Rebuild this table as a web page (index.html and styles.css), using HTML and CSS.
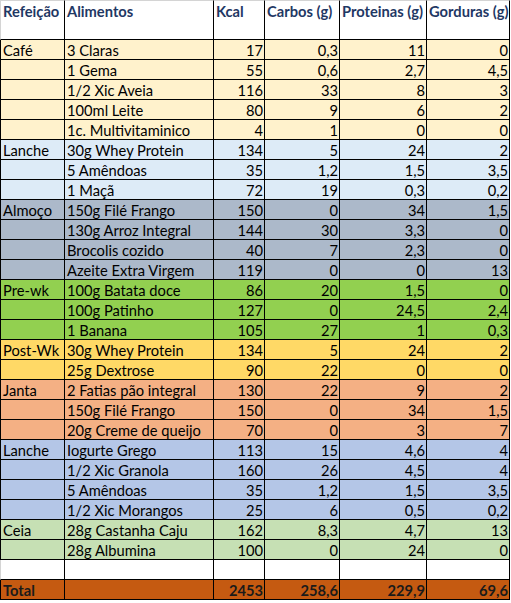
FILE: index.html
```html
<!DOCTYPE html>
<html lang="pt">
<head>
<meta charset="utf-8">
<title>Dieta</title>
<link rel="stylesheet" href="styles.css">
</head>
<body>
<div class="sheet">
  <div class="row head">
    <div class="c">Refeição</div><div class="c">Alimentos</div><div class="c">Kcal</div><div class="c">Carbos (g)</div><div class="c">Proteinas (g)</div><div class="c">Gorduras (g)</div>
  </div>
  <div class="row blank"><div class="c"></div><div class="c"></div><div class="c"></div><div class="c"></div><div class="c"></div><div class="c"></div></div>

  <div class="row cafe"><div class="c">Café</div><div class="c">3 Claras</div><div class="c n">17</div><div class="c n">0,3</div><div class="c n">11</div><div class="c n">0</div></div>
  <div class="row cafe"><div class="c"></div><div class="c">1 Gema</div><div class="c n">55</div><div class="c n">0,6</div><div class="c n">2,7</div><div class="c n">4,5</div></div>
  <div class="row cafe"><div class="c"></div><div class="c">1/2 Xic Aveia</div><div class="c n">116</div><div class="c n">33</div><div class="c n">8</div><div class="c n">3</div></div>
  <div class="row cafe"><div class="c"></div><div class="c">100ml Leite</div><div class="c n">80</div><div class="c n">9</div><div class="c n">6</div><div class="c n">2</div></div>
  <div class="row cafe"><div class="c"></div><div class="c">1c. Multivitaminico</div><div class="c n">4</div><div class="c n">1</div><div class="c n">0</div><div class="c n">0</div></div>

  <div class="row lanche"><div class="c">Lanche</div><div class="c">30g Whey Protein</div><div class="c n">134</div><div class="c n">5</div><div class="c n">24</div><div class="c n">2</div></div>
  <div class="row lanche"><div class="c"></div><div class="c">5 Amêndoas</div><div class="c n">35</div><div class="c n">1,2</div><div class="c n">1,5</div><div class="c n">3,5</div></div>
  <div class="row lanche"><div class="c"></div><div class="c">1 Maçã</div><div class="c n">72</div><div class="c n">19</div><div class="c n">0,3</div><div class="c n">0,2</div></div>

  <div class="row almoco"><div class="c">Almoço</div><div class="c">150g Filé Frango</div><div class="c n">150</div><div class="c n">0</div><div class="c n">34</div><div class="c n">1,5</div></div>
  <div class="row almoco"><div class="c"></div><div class="c">130g Arroz Integral</div><div class="c n">144</div><div class="c n">30</div><div class="c n">3,3</div><div class="c n">0</div></div>
  <div class="row almoco"><div class="c"></div><div class="c">Brocolis cozido</div><div class="c n">40</div><div class="c n">7</div><div class="c n">2,3</div><div class="c n">0</div></div>
  <div class="row almoco"><div class="c"></div><div class="c">Azeite Extra Virgem</div><div class="c n">119</div><div class="c n">0</div><div class="c n">0</div><div class="c n">13</div></div>

  <div class="row prewk"><div class="c">Pre-wk</div><div class="c">100g Batata doce</div><div class="c n">86</div><div class="c n">20</div><div class="c n">1,5</div><div class="c n">0</div></div>
  <div class="row prewk"><div class="c"></div><div class="c">100g Patinho</div><div class="c n">127</div><div class="c n">0</div><div class="c n">24,5</div><div class="c n">2,4</div></div>
  <div class="row prewk"><div class="c"></div><div class="c">1 Banana</div><div class="c n">105</div><div class="c n">27</div><div class="c n">1</div><div class="c n">0,3</div></div>

  <div class="row postwk"><div class="c">Post-Wk</div><div class="c">30g Whey Protein</div><div class="c n">134</div><div class="c n">5</div><div class="c n">24</div><div class="c n">2</div></div>
  <div class="row postwk"><div class="c"></div><div class="c">25g Dextrose</div><div class="c n">90</div><div class="c n">22</div><div class="c n">0</div><div class="c n">0</div></div>

  <div class="row janta"><div class="c">Janta</div><div class="c">2 Fatias pão integral</div><div class="c n">130</div><div class="c n">22</div><div class="c n">9</div><div class="c n">2</div></div>
  <div class="row janta"><div class="c"></div><div class="c">150g Filé Frango</div><div class="c n">150</div><div class="c n">0</div><div class="c n">34</div><div class="c n">1,5</div></div>
  <div class="row janta"><div class="c"></div><div class="c">20g Creme de queijo</div><div class="c n">70</div><div class="c n">0</div><div class="c n">3</div><div class="c n">7</div></div>

  <div class="row lanche2"><div class="c">Lanche</div><div class="c">Iogurte Grego</div><div class="c n">113</div><div class="c n">15</div><div class="c n">4,6</div><div class="c n">4</div></div>
  <div class="row lanche2"><div class="c"></div><div class="c">1/2 Xic Granola</div><div class="c n">160</div><div class="c n">26</div><div class="c n">4,5</div><div class="c n">4</div></div>
  <div class="row lanche2"><div class="c"></div><div class="c">5 Amêndoas</div><div class="c n">35</div><div class="c n">1,2</div><div class="c n">1,5</div><div class="c n">3,5</div></div>
  <div class="row lanche2"><div class="c"></div><div class="c">1/2 Xic Morangos</div><div class="c n">25</div><div class="c n">6</div><div class="c n">0,5</div><div class="c n">0,2</div></div>

  <div class="row ceia"><div class="c">Ceia</div><div class="c">28g Castanha Caju</div><div class="c n">162</div><div class="c n">8,3</div><div class="c n">4,7</div><div class="c n">13</div></div>
  <div class="row ceia"><div class="c"></div><div class="c">28g Albumina</div><div class="c n">100</div><div class="c n">0</div><div class="c n">24</div><div class="c n">0</div></div>

  <div class="row blank"><div class="c"></div><div class="c"></div><div class="c"></div><div class="c"></div><div class="c"></div><div class="c"></div></div>

  <div class="row total"><div class="c">Total</div><div class="c"></div><div class="c n">2453</div><div class="c n">258,6</div><div class="c n">229,9</div><div class="c n">69,6</div></div>
</div>
</body>
</html>
```

FILE: styles.css
```css
* { box-sizing: border-box; }

html, body {
  margin: 0;
  padding: 0;
  background: #ffffff;
}

.sheet {
  display: grid;
  grid-template-columns: 65px 149px 51px 75px 87px 83px;
  grid-auto-rows: 20px;
  width: 510px;
  font-family: Lato, "Liberation Sans", sans-serif;
  font-size: 14.7px;
  color: #000;
}

.row { display: contents; }

.c {
  border-right: 1px solid #000;
  border-bottom: 1px solid #000;
  padding: 0 2px 0 2px;
  display: flex;
  align-items: flex-end;
  white-space: nowrap;
  overflow: hidden;
  line-height: 17px;
}

.row > .c:first-child {
  border-left: 1px solid #000;
}

.n {
  justify-content: flex-end;
  padding-right: 1px;
}

.head > .c {
  height: 21px;
  border-top: 1px solid #d4d4d4;
  font-weight: bold;
  color: #1f3864;
}

.head > .c:first-child,
.blank > .c:first-child {
  border-left-color: #d4d4d4;
}

.blank > .c { background: #ffffff; }
.cafe > .c { background: #fff2cc; }
.lanche > .c { background: #ddebf7; }
.almoco > .c { background: #acb9ca; }
.prewk > .c { background: #92d050; }
.postwk > .c { background: #ffd966; }
.janta > .c { background: #f4b084; }
.lanche2 > .c { background: #b4c6e7; }
.ceia > .c { background: #c6e0b4; }

.total > .c {
  background: #c55a11;
  font-weight: bold;
  color: #1a1a1a;
}
```
